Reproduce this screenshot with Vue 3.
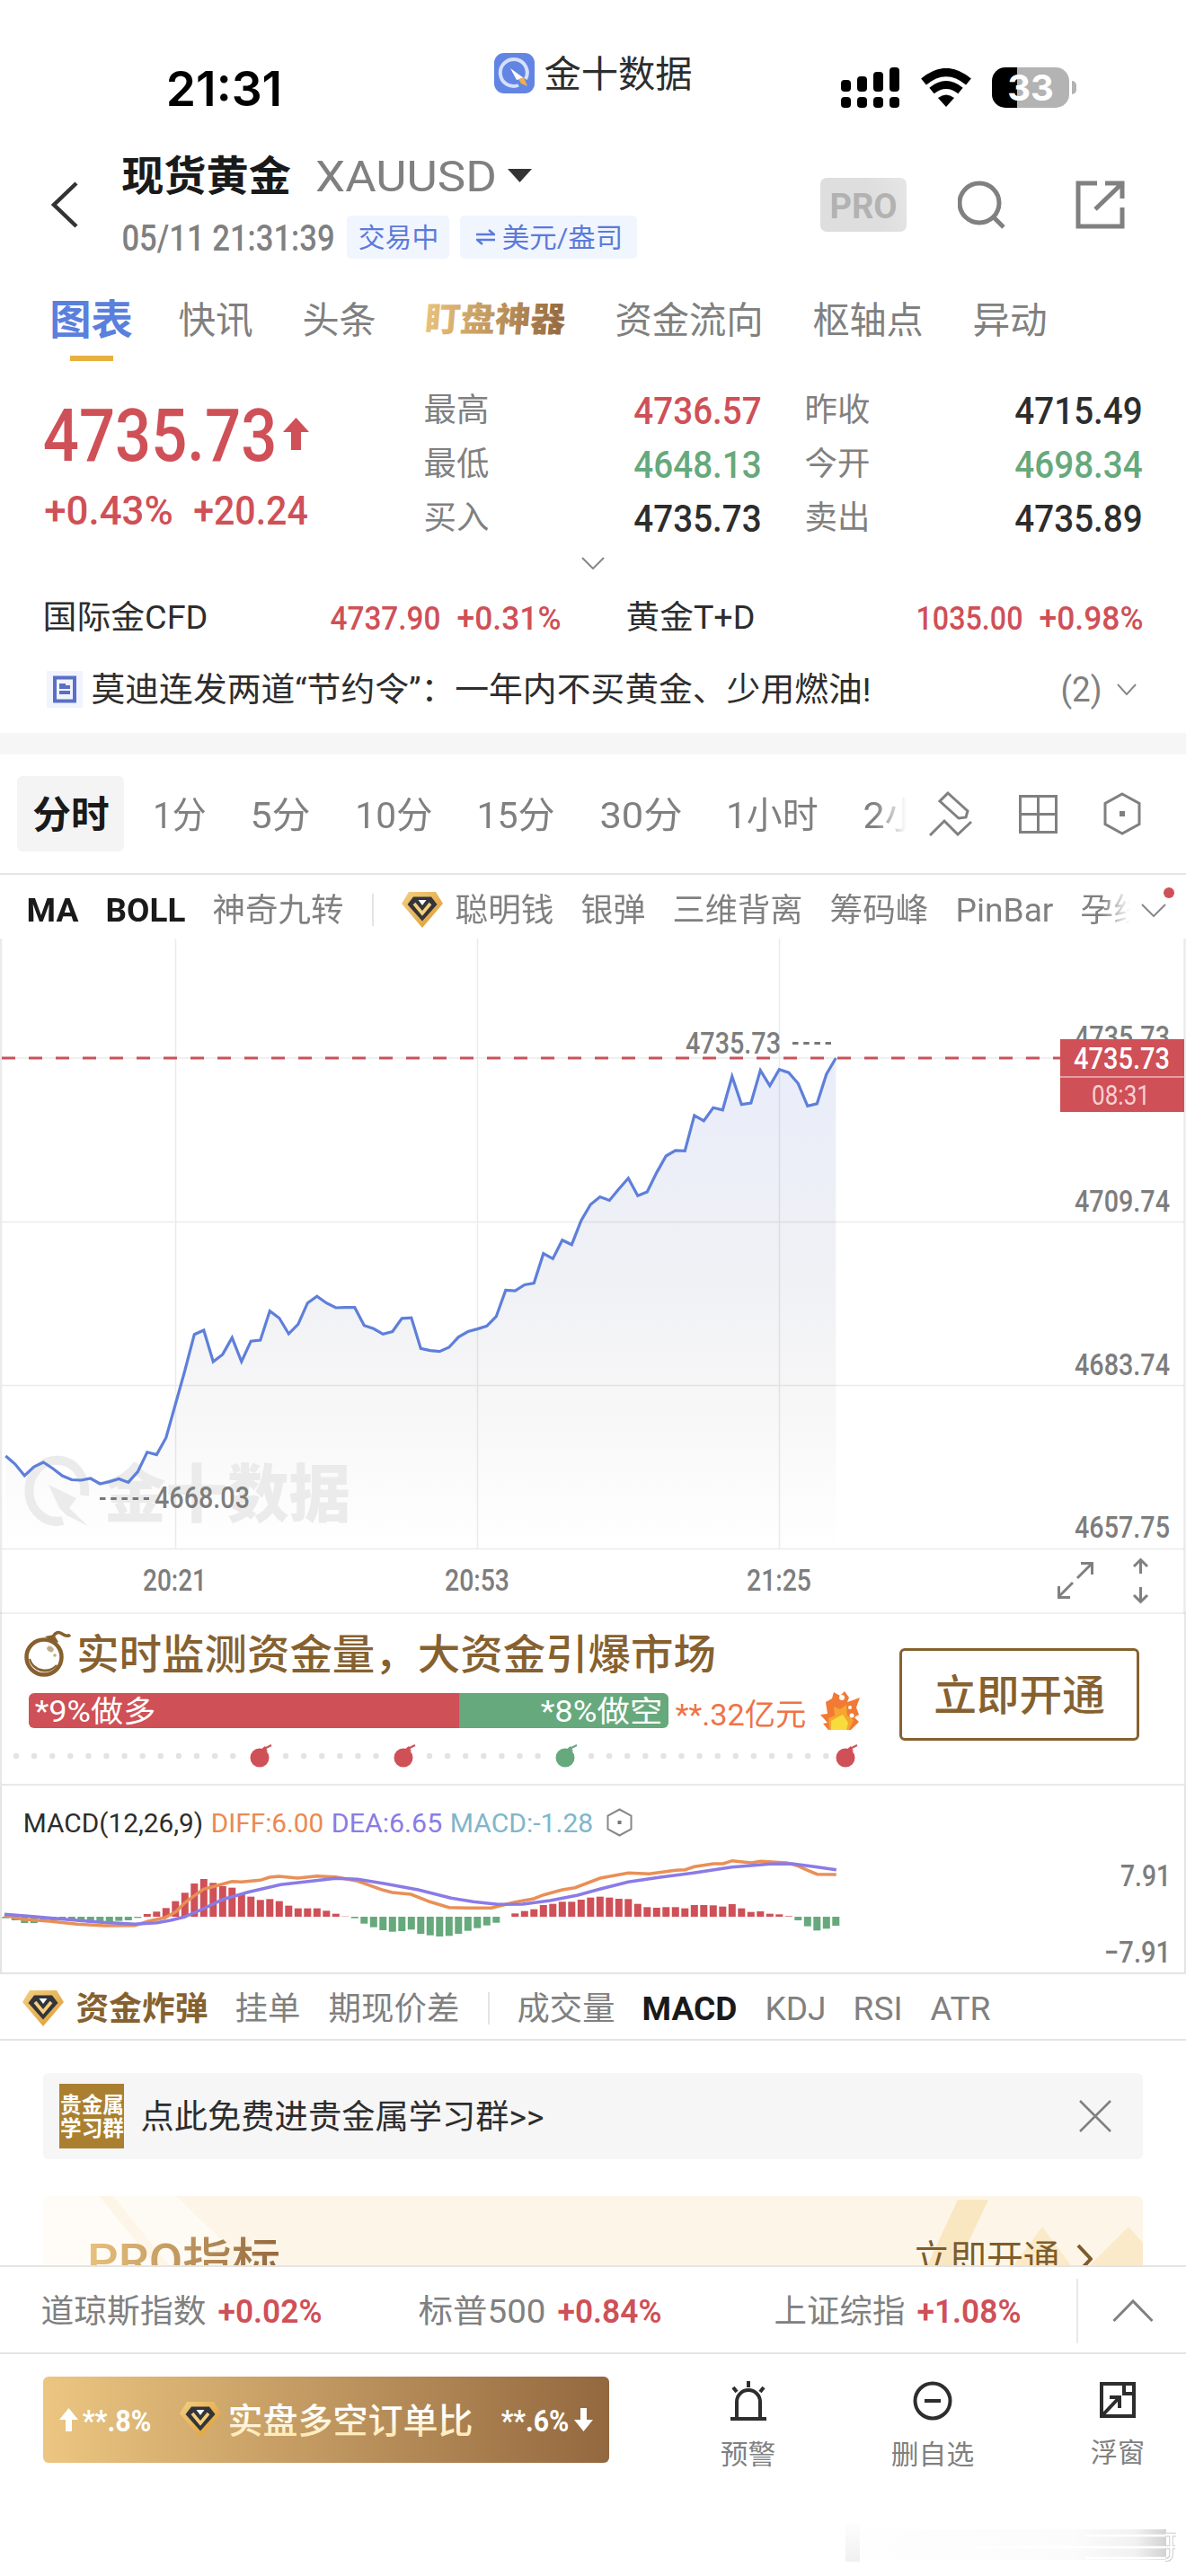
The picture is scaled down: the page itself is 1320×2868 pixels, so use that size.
<script setup>
import { h, ref } from 'vue';

// single line of text squeezed or stretched to a fixed width, vertically centred in its box
const FitText = (props) => {
  const size = Number(props.s);
  const width = Number(props.w);
  return h('svg', { width, height: size, class: 'fit' }, [
    h('text', {
      x: -size * 0.04,
      y: size * 0.87,
      'font-size': size,
      textLength: width + size * 0.08,
      lengthAdjust: 'spacingAndGlyphs',
    }, props.t),
  ]);
};
FitText.props = ['t', 'w', 's'];

// gold diamond with the dark V
const Diamond = () =>
  h('svg', { width: 46, height: 40, viewBox: '0 0 46 40', class: 'diamond' }, [
    h('path', { d: 'M8 0H38L46 13L23 40L0 13Z', fill: 'url(#gem)' }),
    h('path', { d: 'M13 5.5H33L39.5 14L23 32.5L6.5 14Z', fill: '#33353a' }),
    h('path', { d: 'M14 13L23 24L32 13', fill: 'none', stroke: '#f5cf7c', 'stroke-width': 3.6 }),
    h('path', { d: 'M18.5 9H27.5L23 15Z', fill: '#fff' }),
  ]);

const tabs = [
  { t: '图表', w: 89, s: 46, c: 'on' },
  { t: '快讯', w: 80, s: 41 },
  { t: '头条', w: 79, s: 41 },
  { t: '盯盘神器', w: 153, s: 38, c: 'gold' },
  { t: '资金流向', w: 162, s: 41 },
  { t: '枢轴点', w: 120, s: 41 },
  { t: '异动', w: 80, s: 41 },
];

const quotes = [
  { label: '最高', value: '4736.57', c: 'red' },
  { label: '昨收', value: '4715.49', c: '' },
  { label: '最低', value: '4648.13', c: 'green' },
  { label: '今开', value: '4698.34', c: 'green' },
  { label: '买入', value: '4735.73', c: '' },
  { label: '卖出', value: '4735.89', c: '' },
];

const periods = [
  { t: '1分', w: 56 },
  { t: '5分', w: 64 },
  { t: '10分', w: 83 },
  { t: '15分', w: 84 },
  { t: '30分', w: 89 },
  { t: '1小时', w: 99 },
  { t: '2小时', w: 107 },
];

const smart = [
  { t: '聪明钱', w: 107 },
  { t: '银弹', w: 69 },
  { t: '三维背离', w: 142 },
  { t: '筹码峰', w: 107 },
  { t: 'PinBar', w: 106 },
  { t: '孕线', w: 70 },
];

const step = 10.5;
const start = 6.3;

const prices = ref([
  576, 585, 598, 588, 583, 590, 598, 602.5, 603, 601, 607, 604.6, 601.4, 605.4, 593.6, 571.8, 574.6, 555.7, 518.2, 480.7,
  440.7, 436, 471, 462.9, 444.3, 471, 448.2, 447.1, 414.6, 422.5, 440, 429.3, 405.7, 398.2, 405.7, 411, 410.7, 410.7,
  430.7, 434.3, 440.4, 437.5, 422.9, 422.1, 456.4, 458.6, 459.6, 455, 443.6, 437.5, 434.6, 431.4, 420.7, 391.4, 392.1,
  385.4, 383.6, 350.7, 356.4, 335.7, 340.7, 313.9, 296, 287.5, 291.4, 278.8, 266.7, 286.2, 281.9, 260.6, 242, 235.9,
  236.3, 196.9, 202.9, 188.2, 190.8, 153.5, 184.7, 183, 146.6, 163.9, 145.7, 149.2, 161.3, 186.4, 183.8, 150.9, 133,
]);
const line = prices.value.map((y, i) => `${(start + i * step).toFixed(1)},${y}`).join(' ');
const area = `${start},680 ${line} 930.3,680`;

const macd = [
  -5, -12, -21, -21, -17, -14, -12, -14, -18, -20, -20, -18, -14, -12, -4, 9, 17, 29, 52, 80, 111, 126, 113, 102, 97, 78,
  67, 56, 59, 52, 37, 28, 28, 28, 20, 10, 1, -5, -23, -35, -45, -50, -48, -43, -57, -62, -66, -64, -57, -47, -38, -29,
  -20, 0, 11, 19, 25, 39, 43, 50, 50, 57, 64, 67, 64, 60, 59, 43, 32, 30, 32, 32, 28, 39, 39, 38, 34, 42, 28, 16, 18, 10,
  8, 2, -12, -32, -46, -40, -30,
];
const bars = macd.map((v, i) => ({
  x: start + i * step - 4,
  y: v > 0 ? 146 - v / 3 : 146,
  h: Math.abs(v) / 3,
  fill: v > 0 ? '#cf5057' : '#66a97c',
}));

const toPoints = (list) => list.map(([x, y]) => `${(x / 1.633).toFixed(1)},${(y / 3 + 2).toFixed(1)}`).join(' ');
const diff = toPoints([
  [8, 427], [40, 440], [90, 447], [140, 457], [190, 462], [245, 461], [270, 447], [300, 435], [320, 415], [336, 385],
  [353, 362], [370, 340], [395, 328], [422, 314], [439, 316], [473, 310], [490, 300], [507, 297], [541, 303], [576, 296],
  [610, 299], [650, 313], [696, 343], [713, 351], [747, 357], [781, 382], [816, 401], [850, 403], [893, 403], [936, 383],
  [970, 372], [988, 359], [1022, 342], [1045, 335], [1091, 303], [1142, 286], [1180, 289], [1228, 277], [1245, 275],
  [1262, 265], [1297, 255], [1314, 255], [1331, 245], [1365, 252], [1383, 247], [1430, 252], [1450, 262], [1468, 277],
  [1485, 290], [1520, 291],
]);
const dea = toPoints([
  [8, 424], [60, 431], [120, 441], [180, 450], [245, 457], [285, 452], [310, 444], [335, 433], [370, 405], [405, 374],
  [450, 350], [510, 325], [560, 314], [610, 304], [650, 307], [700, 322], [760, 342], [820, 370], [860, 382], [905, 391],
  [950, 390], [1000, 378], [1050, 360], [1090, 340], [1142, 316], [1200, 300], [1260, 286], [1330, 266], [1400, 256],
  [1440, 255], [1480, 265], [1520, 275],
]);

const run = (from, count) => Array.from({ length: count }, (_, i) => from + i * 20.1);
const dots = [...run(18, 13), ...run(318, 6), ...run(478, 7), ...run(658, 14)];
const bombs = [
  { x: 289, fill: '#cf5057' },
  { x: 449, fill: '#cf5057' },
  { x: 629, fill: '#66a97c' },
  { x: 941, fill: '#cf5057' },
];
</script>

<template>
  <main class="page">
    <svg width="0" height="0" class="defs">
      <defs>
        <linearGradient id="gold"><stop offset="0" stop-color="#e9c27c" /><stop offset="1" stop-color="#94683f" /></linearGradient>
        <linearGradient id="cream" x2="0" y2="1"><stop offset="0.3" stop-color="#fff" /><stop offset="1" stop-color="#ffe3a0" /></linearGradient>
        <linearGradient id="gem" x2="1" y2="1"><stop offset="0" stop-color="#f3cf83" /><stop offset="1" stop-color="#dd9a2e" /></linearGradient>
      </defs>
    </svg>

    <header class="status">
      <FitText t="21:31" w="125" s="54" class="time" />
      <div class="brand">
        <svg width="45" height="45" viewBox="0 0 45 45">
          <rect width="45" height="45" rx="11" fill="#6285e4" />
          <path d="M35 29A15 15 0 1 0 27 36" fill="none" stroke="#d5e0ff" stroke-width="4" />
          <path d="M18 17L33 28L25 30Z" fill="#fff" />
          <path d="M27 29L33 27L37 37L30 34Z" fill="#efb04a" />
        </svg>
        <FitText t="金十数据" w="162" s="41" />
      </div>
      <div class="signals">
        <svg width="66" height="46" viewBox="0 0 66 46">
          <rect x="0" y="14" width="11" height="13" rx="4" /><rect x="18" y="10" width="11" height="17" rx="4" />
          <rect x="36" y="5" width="11" height="22" rx="4" /><rect x="54" y="0" width="11" height="27" rx="4" />
          <rect v-for="x in [0, 18, 36, 54]" :key="x" :x="x" y="33" width="11" height="12" rx="4" />
        </svg>
        <svg width="58" height="43" viewBox="0 0 58 43">
          <path d="M4 15Q29 -6 54 15" fill="none" stroke="#000" stroke-width="9" />
          <path d="M13 25Q29 12 45 25" fill="none" stroke="#000" stroke-width="8.5" />
          <path d="M20 33Q29 26 38 33L29 43Z" />
        </svg>
        <div class="battery"><span>33</span></div>
      </div>
    </header>

    <section class="header">
      <svg class="back" width="30" height="52" viewBox="0 0 30 52"><path d="M28 2L3 26L28 50" fill="none" stroke="#333" stroke-width="4.5" /></svg>
      <div class="title">
        <div class="name">
          <FitText t="现货黄金" w="185" s="46" class="strong" />
          <FitText t="XAUUSD" w="198" s="48" class="grey" />
          <svg width="27" height="15"><path d="M0 0H27L13.500 15Z" fill="#333" /></svg>
        </div>
        <div class="meta">
          <FitText t="05/11 21:31:39" w="234" s="40" class="grey mid" />
          <span class="tag"><FitText t="交易中" w="87" s="30" /></span>
          <span class="tag">
            <svg width="21" height="18" viewBox="0 0 21 18"><path d="M0 6H20L14 1M21 12H1L7 17" fill="none" stroke="#5b7bd9" stroke-width="2.500" /></svg>
            <FitText t="美元/盎司" w="132" s="30" />
          </span>
        </div>
      </div>
      <div class="tools">
        <span class="pro"><FitText t="PRO" w="72" s="39" /></span>
        <svg width="54" height="54" viewBox="0 0 54 54" fill="none" stroke="#808080" stroke-width="5"><circle cx="24" cy="25" r="22" /><path d="M39 40L51 52" /></svg>
        <svg width="56" height="54" viewBox="0 0 56 54" fill="none" stroke="#808080" stroke-width="5"><path d="M24 3H3V51H52V30M33 3H52V20M52 3L22 32" /></svg>
      </div>
    </section>

    <nav class="tabs">
      <FitText v-for="tab in tabs" :key="tab.t" :t="tab.t" :w="tab.w" :s="tab.s" :class="tab.c" />
    </nav>

    <section class="quote">
      <div class="last">
        <div class="price">
          <FitText t="4735.73" w="254" s="82" />
          <svg width="29" height="36"><path d="M14.500 0L29 16H20V36H9V16H0Z" fill="#cf5057" /></svg>
        </div>
        <div class="change">
          <FitText t="+0.43%" w="140" s="45" />
          <FitText t="+20.24" w="124" s="45" />
        </div>
      </div>
      <div class="grid">
        <div v-for="q in quotes" :key="q.label" class="cell">
          <FitText :t="q.label" w="70" s="36" class="grey thin" />
          <FitText :t="q.value" w="139" s="42" :class="q.c" />
        </div>
      </div>
    </section>
    <div class="more"><svg width="26" height="14"><path d="M1 1L13 13L25 1" fill="none" stroke="#888" stroke-width="2" /></svg></div>

    <section class="related">
      <div class="item">
        <FitText t="国际金CFD" w="181" s="36" class="dark" />
        <FitText t="4737.90" w="120" s="37" class="push" />
        <FitText t="+0.31%" w="113" s="37" />
      </div>
      <div class="item">
        <FitText t="黄金T+D" w="141" s="36" class="dark" />
        <FitText t="1035.00" w="116" s="37" class="push" />
        <FitText t="+0.98%" w="113" s="37" />
      </div>
    </section>

    <section class="news">
      <svg width="40" height="41"><rect width="40" height="41" fill="#f1f4fe" /><path d="M9 7.500H31V33.500H9ZM14 16H21M14 18H26M14 24H26" fill="none" stroke="#5a70c4" stroke-width="4" /></svg>
      <FitText t="莫迪连发两道“节约令”：一年内不买黄金、少用燃油!" w="865" s="37" />
      <FitText t="(2)" w="43" s="38" class="grey push" />
      <svg width="22" height="13"><path d="M1 1L11 12L21 1" fill="none" stroke="#888" stroke-width="2" /></svg>
    </section>
    <div class="band"></div>

    <section class="periods">
      <div class="scroller">
        <span class="chip"><FitText t="分时" w="82" s="42" /></span>
        <FitText v-for="p in periods" :key="p.t" :t="p.t" :w="p.w" s="41" />
      </div>
      <div class="icons">
        <svg width="48" height="50" viewBox="0 0 48 50" fill="none" stroke="#808080" stroke-width="3"><path d="M21 2L43 22L41 29L33 30L12 11ZM1 49L17 33L32 48L47 34" /></svg>
        <svg width="43" height="43" viewBox="0 0 43 43" fill="none" stroke="#808080" stroke-width="3"><path d="M1.500 1.500H41.500V41.500H1.500ZM21.500 1V42M1 21.500H42" /></svg>
        <svg width="42" height="48" viewBox="0 0 42 48"><path d="M21 2L40 12.500V35.500L21 46L2 35.500V12.500Z" fill="none" stroke="#808080" stroke-width="3" /><rect x="18" y="21" width="6" height="6" fill="#808080" /></svg>
      </div>
    </section>

    <section class="indicators">
      <div class="scroller">
        <FitText t="MA" w="55" s="36" class="strong" />
        <FitText t="BOLL" w="86" s="36" class="strong" />
        <FitText t="神奇九转" w="143" s="36" />
        <i class="sep"></i>
        <Diamond />
        <FitText v-for="s in smart" :key="s.t" :t="s.t" :w="s.w" s="36" />
      </div>
      <div class="drop">
        <svg width="28" height="15"><path d="M1 1L14 14L27 1" fill="none" stroke="#888" stroke-width="2" /></svg>
        <i class="dot"></i>
      </div>
    </section>

    <svg class="chart" width="1320" height="752" viewBox="0 0 1320 752">
      <defs>
        <linearGradient id="fill" gradientUnits="userSpaceOnUse" x1="0" y1="133" x2="0" y2="680">
          <stop offset="0" stop-color="#e9edfa" />
          <stop offset="0.45" stop-color="#f0f1f5" />
          <stop offset="0.75" stop-color="#f8f8f8" />
          <stop offset="1" stop-color="#fff" />
        </linearGradient>
      </defs>
      <polygon :points="area" fill="url(#fill)" />
      <g stroke="#000" stroke-opacity="0.08" stroke-width="1.500">
        <path d="M195.500 0V680M531.500 0V680M867.500 0V680M2 133H1180M2 315.500H1318M2 497.500H1318M2 679.500H1318M0 751H1320" />
        <path d="M1 0V752M1318.500 0V752" stroke-width="2.500" />
      </g>
      <g class="watermark">
        <path d="M70 648A31 34 0 1 1 94 620" fill="none" stroke="#ebebeb" stroke-width="10" />
        <path d="M54 608L85 623L77 634L98 654L74 642L66 634Z" />
        <text x="116" y="644" font-size="70" textLength="274" lengthAdjust="spacingAndGlyphs">金十数据</text>
      </g>
      <polyline :points="line" fill="none" stroke="#5e7fda" stroke-width="3.200" />
      <path d="M2 133H1180" stroke="#c9525a" stroke-width="3" stroke-dasharray="15 15" />
      <g class="label">
        <text x="763" y="127.500" font-size="33" textLength="106" lengthAdjust="spacingAndGlyphs">4735.73</text>
        <text x="172" y="634" font-size="33" textLength="106" lengthAdjust="spacingAndGlyphs">4668.03</text>
        <text x="1196" y="121" font-size="33" textLength="106" lengthAdjust="spacingAndGlyphs">4735.73</text>
        <text x="1196" y="303.500" font-size="33" textLength="106" lengthAdjust="spacingAndGlyphs">4709.74</text>
        <text x="1196" y="485.500" font-size="33" textLength="106" lengthAdjust="spacingAndGlyphs">4683.74</text>
        <text x="1196" y="667" font-size="33" textLength="106" lengthAdjust="spacingAndGlyphs">4657.75</text>
        <text x="159" y="726" font-size="33" textLength="71" lengthAdjust="spacingAndGlyphs">20:21</text>
        <text x="495" y="726" font-size="33" textLength="72" lengthAdjust="spacingAndGlyphs">20:53</text>
        <text x="831" y="726" font-size="33" textLength="72" lengthAdjust="spacingAndGlyphs">21:25</text>
      </g>
      <path d="M882 116.500H925M111 623.500H166" stroke="#777" stroke-width="3" stroke-dasharray="6.500 5.700" />
      <rect x="1180" y="112" width="138" height="81" fill="#cf5057" />
      <path d="M1180 154H1318" stroke="#ebb9bc" stroke-width="1.500" />
      <g class="label">
        <text x="1195" y="144.500" font-size="33" textLength="107" lengthAdjust="spacingAndGlyphs" class="white">4735.73</text>
        <text x="1215" y="185" font-size="31" textLength="65" lengthAdjust="spacingAndGlyphs" class="pink">08:31</text>
      </g>
      <g fill="none" stroke="#808080" stroke-width="3">
        <path d="M1199 712L1215 696M1203 695.500H1215.500V708M1194 717L1178 733M1178.500 721V733.500H1191" />
        <path d="M1269.500 707V692M1262 699L1269.500 691.500L1277 699M1269.500 722V738M1262 731L1269.500 738.500L1277 731" />
      </g>
    </svg>

    <section class="banner">
      <div class="promo">
        <div class="slogan">
          <svg width="52" height="54" viewBox="0 0 52 54">
            <circle cx="22" cy="31" r="19.500" fill="#fff" stroke="#86612f" stroke-width="4.500" />
            <path d="M6 33A17 17 0 0 0 36 40A18 18 0 0 1 6 33" fill="#c9bfae" stroke="#86612f" stroke-width="2" />
            <path d="M23 8L33 6L38 14L34 16Z" fill="#86612f" />
            <path d="M32 8Q36 1 42 5T51 6" fill="none" stroke="#86612f" stroke-width="3.500" />
            <ellipse cx="29" cy="22" rx="4" ry="3" fill="#c0ad8d" transform="rotate(35 29 22)" />
            <circle cx="34" cy="29" r="1.800" fill="#c0ad8d" />
          </svg>
          <FitText t="实时监测资金量，大资金引爆市场" w="708" s="46" />
        </div>
        <div class="ratio">
          <div class="long"><FitText t="*9%做多" w="132" s="33" /></div>
          <div class="short"><FitText t="*8%做空" w="133" s="33" /></div>
          <FitText t="**.32亿元" w="143" s="34" class="amount" />
          <svg class="flame" width="45" height="43" viewBox="0 0 45 43">
            <path d="M9 43L3 36L8 35L0 26L8 25L6 12L13 8L15 1L22 5L27 0L32 7L30 12L36 10L44 7L40 18L43 26L38 29L43 34L34 43Z" fill="#f07a36" />
            <path d="M10 43L9 30L16 27L15 17L22 20L29 15L30 27L37 32L32 43Z" fill="#f6a52f" />
            <path d="M12 43L12 33L19 29L25 26L31 35L29 43Z" fill="#f8dc3e" />
            <circle cx="24" cy="7" r="3" fill="#fff" /><circle cx="35" cy="27" r="2.500" fill="#fff" /><circle cx="33" cy="18" r="2" fill="#fff" />
          </svg>
        </div>
        <svg class="track" width="970" height="32">
          <circle v-for="x in dots" :key="x" :cx="x" cy="16" r="3.200" fill="#e3e3e3" />
          <g v-for="b in bombs" :key="b.x" :fill="b.fill">
            <circle :cx="b.x" cy="18" r="10.500" />
            <path :d="`M${b.x + 1} 9L${b.x + 6} 5L${b.x + 9} 11Z`" />
            <path :d="`M${b.x + 5} 8L${b.x + 13} 4`" :stroke="b.fill" stroke-width="2" />
          </g>
        </svg>
      </div>
      <button class="open"><FitText t="立即开通" w="187" s="47" /></button>
    </section>

    <section class="macd">
      <div class="legend">
        <FitText t="MACD(12,26,9)" w="198" s="30" />
        <FitText t="DIFF:6.00" w="123" s="30" class="diff" />
        <FitText t="DEA:6.65" w="121" s="30" class="dea" />
        <FitText t="MACD:-1.28" w="157" s="30" class="val" />
        <svg width="29" height="32" viewBox="0 0 29 32"><path d="M14.500 1.500L27.500 8.500V23.500L14.500 30.500L1.500 23.500V8.500Z" fill="none" stroke="#888" stroke-width="2" /><rect x="12.500" y="14" width="4" height="4" fill="#777" /></svg>
      </div>
      <svg class="plot" width="1320" height="210">
        <rect v-for="(b, i) in bars" :key="i" :x="b.x" :y="b.y" width="8" :height="b.h" :fill="b.fill" />
        <polyline :points="diff" fill="none" stroke="#e98f57" stroke-width="3.500" />
        <polyline :points="dea" fill="none" stroke="#8a7be6" stroke-width="3.500" />
        <g class="label">
          <text x="1247" y="112" font-size="33" textLength="56" lengthAdjust="spacingAndGlyphs">7.91</text>
          <text x="1229" y="197" font-size="33" textLength="74" lengthAdjust="spacingAndGlyphs">−7.91</text>
        </g>
      </svg>
    </section>

    <section class="indicators sub">
      <Diamond />
      <FitText t="资金炸弹" w="144" s="36" class="brown" />
      <FitText t="挂单" w="70" s="36" />
      <FitText t="期现价差" w="143" s="36" />
      <i class="sep"></i>
      <FitText t="成交量" w="106" s="36" />
      <FitText t="MACD" w="103" s="37" class="strong" />
      <FitText t="KDJ" w="65" s="37" />
      <FitText t="RSI" w="52" s="37" />
      <FitText t="ATR" w="64" s="37" />
    </section>

    <section class="group">
      <div class="cover">
        <FitText t="贵金属" w="69" s="24" />
        <FitText t="学习群" w="69" s="24" />
      </div>
      <FitText t="点此免费进贵金属学习群>>" w="446" s="37" />
      <svg class="push" width="36" height="36"><path d="M1 1L35 35M35 1L1 35" stroke="#808080" stroke-width="2.500" /></svg>
    </section>

    <section class="pro-card">
      <svg class="shape" width="1224" height="77">
        <path d="M0 0H62L125 77H0Z" fill="#fff" opacity="0.7" />
        <path d="M78 0H148L200 50L175 77H140Z" fill="#fff" opacity="0.5" />
        <path d="M1018 4H1052L1018 77H984Z" fill="#f9e7c2" />
        <path d="M1080 77L1112 34L1144 77ZM1165 77L1208 34L1224 52V77Z" fill="#f9e7c2" opacity="0.8" />
      </svg>
      <FitText t="PRO指标" w="211" s="52" class="name" />
      <FitText t="立即开通" w="160" s="41" class="act" />
      <svg class="go" width="18" height="32"><path d="M2 1L16 16L2 31" fill="none" stroke="#7f5c2c" stroke-width="4" /></svg>
    </section>

    <section class="indices">
      <div class="idx"><FitText t="道琼斯指数" w="181" s="36" class="grey" /><FitText t="+0.02%" w="113" s="37" class="up" /></div>
      <div class="idx second"><FitText t="标普500" w="139" s="36" class="grey" /><FitText t="+0.84%" w="113" s="37" class="up" /></div>
      <div class="idx third"><FitText t="上证综指" w="143" s="36" class="grey" /><FitText t="+1.08%" w="113" s="37" class="up" /></div>
      <i class="bar"></i>
      <svg width="46" height="26"><path d="M1.500 24L23 2L44.500 24" fill="none" stroke="#808080" stroke-width="3" /></svg>
    </section>

    <footer class="actions">
      <div class="order">
        <svg width="21" height="26"><path d="M10.500 0L21 13H14V26H7V13H0Z" fill="#fff" /></svg>
        <FitText t="**.8%" w="74" s="34" class="pct" />
        <Diamond />
        <FitText t="实盘多空订单比" w="270" s="39" class="text" />
        <FitText t="**.6%" w="73" s="34" class="pct end" />
        <svg width="21" height="26"><path d="M10.500 26L21 13H14V0H7V13H0Z" fill="#fff" /></svg>
      </div>
      <div class="act">
        <svg width="40" height="44" viewBox="0 0 40 44" fill="none" stroke="#2d2d2d" stroke-width="4"><path d="M0 42H40M7 42V23A13 13 0 0 1 33 23V42M20 0V7M3 7L7 12M37 7L33 12" /></svg>
        <FitText t="预警" w="59" s="30" />
      </div>
      <div class="act">
        <svg width="44" height="44" viewBox="0 0 44 44" fill="none" stroke="#2d2d2d" stroke-width="4"><circle cx="22" cy="22" r="19.500" /><path d="M13 22H31" /></svg>
        <FitText t="删自选" w="90" s="30" />
      </div>
      <div class="act">
        <svg width="40" height="42" viewBox="0 0 40 42" fill="none" stroke="#2d2d2d" stroke-width="4"><path d="M2 3H38V39H2ZM27 3V14H38M4 37L21 19M11 18H22V30" /></svg>
        <FitText t="浮窗" w="58" s="30" />
      </div>
    </footer>

    <svg class="smudge" width="380" height="56">
      <defs>
        <linearGradient id="haze"><stop offset="0" stop-color="#fefefe" /><stop offset="0.7" stop-color="#fbfbfb" /><stop offset="0.9" stop-color="#f1f1f1" /><stop offset="1" stop-color="#d2d2d2" /></linearGradient>
        <linearGradient id="edge" x2="0" y2="1"><stop offset="0" stop-color="#fefefe" /><stop offset="1" stop-color="#f0f0f0" /></linearGradient>
      </defs>
      <rect x="3" y="4" width="16" height="44" fill="url(#edge)" />
      <rect x="20" y="12" width="340" height="34" fill="url(#haze)" />
      <path d="M270 19H362M150 32H362M270 44H362" stroke="#fff" stroke-width="2.500" />
      <path d="M359 18H371M359 32H370M365.500 18V41Q365 46 359 46" fill="none" stroke="#ccc" stroke-width="4.500" />
      <path d="M359 18H371M359 32H370M365.500 18V41Q365 46 359 46" fill="none" stroke="#fff" stroke-width="2.500" />
    </svg>
  </main>
</template>

<style>
body {
  background: #fff;
}
</style>

<style scoped>
.page {
  position: relative;
  width: 1320px;
  height: 2868px;
  overflow: hidden;
  background: #fff;
  color: #2d2d2d;
  fill: #2d2d2d;
  font-family: Roboto, "Noto Sans CJK SC", sans-serif;
}

.page * {
  box-sizing: border-box;
}

.page svg {
  display: block;
  flex: none;
}

.fit {
  overflow: visible;
}

.defs {
  position: absolute;
}

.grey {
  fill: #808080;
}

.thin {
  font-weight: 400;
}

.mid {
  font-weight: 500;
}

.strong {
  fill: #1a1a1a;
  font-weight: 700;
}

.red {
  fill: #cf5057;
}

.green {
  fill: #66a97c;
}

.push {
  margin-left: auto;
}

.status {
  display: flex;
  align-items: center;
  height: 150px;
  padding: 45px 130px 0 187px;
}

.time {
  fill: #000;
  font-family: Inter, sans-serif;
  font-weight: 600;
}

.brand {
  display: flex;
  align-items: center;
  gap: 12px;
  margin: -32px 0 0 238px;
}

.signals {
  display: flex;
  align-items: center;
  gap: 22px;
  margin-left: auto;
  fill: #000;
}

.battery {
  position: relative;
  width: 86px;
  height: 45px;
  border-radius: 15px;
  background: linear-gradient(90deg, #000 28px, #b3b3b3 28px);
  color: #fff;
  font: 700 40px/45px Inter, sans-serif;
  text-align: center;
}

.battery::after {
  content: "";
  position: absolute;
  right: -8px;
  top: 15px;
  width: 5px;
  height: 15px;
  border-radius: 0 5px 5px 0;
  background: #b3b3b3;
}

.header {
  display: flex;
  align-items: center;
  height: 156px;
  padding: 0 67px 0 57px;
}

.title {
  margin-left: 50px;
}

.name {
  display: flex;
  align-items: center;
  height: 72px;
}

.name .grey {
  margin: 0 14px 0 31px;
}

.meta {
  display: flex;
  align-items: center;
  height: 66px;
}

.tag {
  display: flex;
  align-items: center;
  justify-content: center;
  gap: 9px;
  width: 114px;
  height: 48px;
  margin-left: 15px;
  border-radius: 5px;
  background: #f1f5fe;
  fill: #5b7bd9;
}

.tag + .tag {
  width: 197px;
  margin-left: 12px;
}

.tools {
  display: flex;
  align-items: center;
  margin-left: auto;
  gap: 77px;
}

.pro {
  display: flex;
  align-items: center;
  justify-content: center;
  width: 96px;
  height: 60px;
  margin-right: -20px;
  border-radius: 7px;
  background: linear-gradient(70deg, #dedede 60%, #e6e6e6);
  fill: #b2b2b2;
  font-weight: 700;
}

.tabs {
  position: relative;
  display: flex;
  align-items: center;
  gap: 58px;
  height: 98px;
  padding-left: 57px;
  fill: #808080;
}

.tabs::after {
  content: "";
  position: absolute;
  left: 78px;
  bottom: 2px;
  width: 48px;
  height: 6px;
  background: #e8b040;
}

.tabs .on {
  margin-right: -4px;
  fill: #5b7fdd;
  font-weight: 700;
}

.tabs .gold {
  fill: url(#gold);
  font-weight: 900;
  transform: skewX(-5deg);
}

.quote {
  display: flex;
  padding: 22px 50px 0 51px;
  font-weight: 500;
}

.last {
  width: 422px;
  fill: #cf5057;
}

.price {
  display: flex;
  align-items: center;
  gap: 10px;
  height: 114px;
}

.change {
  display: flex;
  align-items: center;
  gap: 26px;
  height: 54px;
}

.grid {
  flex: 1;
  display: grid;
  grid-template-columns: 373px 373px;
  column-gap: 51px;
}

.cell {
  display: flex;
  align-items: center;
  justify-content: space-between;
  height: 60px;
}

.more {
  display: flex;
  align-items: center;
  justify-content: center;
  height: 42px;
}

.related {
  display: flex;
  gap: 75px;
  height: 78px;
  padding: 0 49px;
}

.item {
  flex: 1;
  display: flex;
  align-items: center;
  gap: 21px;
  fill: #cf5057;
  font-weight: 500;
}

.item .dark {
  fill: #2d2d2d;
  font-weight: 400;
}

.news {
  display: flex;
  align-items: center;
  gap: 11px;
  height: 82px;
  padding: 0 55px 0 52px;
}

.news .push {
  margin-right: 7px;
}

.band {
  height: 24px;
  margin-top: 8px;
  background: #f6f6f6;
}

.periods {
  display: flex;
  align-items: center;
  height: 134px;
  padding: 0 50px 0 19px;
  border-bottom: 2px solid #e4e4e4;
  fill: #808080;
}

.scroller {
  display: flex;
  align-items: center;
  overflow: hidden;
}

.periods .scroller {
  width: 990px;
  height: 132px;
  gap: 52.5px;
  -webkit-mask-image: linear-gradient(90deg, #000 955px, transparent 990px);
  mask-image: linear-gradient(90deg, #000 955px, transparent 990px);
}

.chip {
  flex: none;
  display: flex;
  align-items: center;
  justify-content: center;
  width: 119px;
  height: 84px;
  margin-right: -19px;
  border-radius: 6px;
  background: #f4f4f4;
  fill: #1a1a1a;
  font-weight: 700;
}

.icons {
  display: flex;
  align-items: center;
  justify-content: space-between;
  width: 236px;
  margin-left: auto;
}

.indicators {
  display: flex;
  align-items: center;
  height: 71px;
  padding: 7px 22px 0 31px;
  fill: #808080;
}

.indicators .scroller {
  width: 1227px;
  height: 64px;
  gap: 33px;
  -webkit-mask-image: linear-gradient(90deg, #000 1195px, transparent 1227px);
  mask-image: linear-gradient(90deg, #000 1195px, transparent 1227px);
}

.indicators .diamond {
  margin-right: -18px;
}

.sep {
  flex: none;
  width: 2px;
  height: 36px;
  background: #e4e4e4;
  margin-right: -2px;
}

.drop {
  position: relative;
  margin-left: 12px;
}

.dot {
  position: absolute;
  left: 25px;
  top: -18px;
  width: 12px;
  height: 12px;
  border-radius: 50%;
  background: #cf5057;
}

.label {
  fill: #7d7d7d;
  font-weight: 500;
}

.label .white {
  fill: #fff;
}

.label .pink {
  fill: #f6cfd1;
  font-weight: 400;
}

.watermark {
  fill: #ebebeb;
  font-weight: 900;
}

.banner {
  display: flex;
  align-items: flex-start;
  height: 191px;
  border: 2px solid #e8e8e8;
  border-top: 0;
}

.slogan {
  display: flex;
  align-items: center;
  gap: 8px;
  height: 86px;
  padding: 2px 0 0 25px;
  fill: #86612f;
  font-weight: 500;
}

.ratio {
  display: flex;
  align-items: center;
  height: 42px;
  padding-left: 30px;
  fill: #fff;
}

.long,
.short {
  display: flex;
  align-items: center;
  height: 39px;
  padding: 0 8px;
}

.long {
  width: 479px;
  border-radius: 6px 0 0 6px;
  background: #cf5057;
}

.short {
  justify-content: flex-end;
  width: 233px;
  border-radius: 0 6px 6px 0;
  background: #66a97c;
}

.amount {
  margin: 8px 0 0 9px;
  fill: #ee7347;
}

.flame {
  margin-left: 17px;
}

.track {
  margin: 14px 0 0 -2px;
}

.open {
  display: flex;
  align-items: center;
  justify-content: center;
  width: 267px;
  height: 103px;
  margin: 38px 0 0 31px;
  padding: 0;
  border: 3px solid #86612f;
  border-radius: 6px;
  background: #fff;
  fill: #86612f;
  font-family: inherit;
  font-weight: 500;
}

.macd {
  position: relative;
  height: 210px;
  border: 2px solid #e4e4e4;
  border-top: 0;
}

.legend {
  display: flex;
  align-items: center;
  gap: 11px;
  height: 82px;
  padding-left: 25px;
}

.legend svg:last-child {
  margin-left: 5px;
}

.legend .diff {
  fill: #ea8a50;
}

.legend .dea {
  fill: #8a7be6;
}

.legend .val {
  fill: #7fb6cb;
}

.plot {
  position: absolute;
  left: -2px;
  top: 0;
}

.sub {
  gap: 33.5px;
  height: 74px;
  padding: 3px 0 0 25px;
  border-bottom: 2px solid #e4e4e4;
}

.sub .diamond {
  margin-right: -19px;
}

.brown {
  fill: #86612f;
  font-weight: 700;
}

.group {
  display: flex;
  align-items: center;
  height: 96px;
  margin: 36px 48px 0;
  padding: 0 35px 0 18px;
  border-radius: 6px;
  background: #f6f6f6;
}

.cover {
  display: flex;
  flex-direction: column;
  align-items: center;
  justify-content: center;
  gap: 2px;
  width: 72px;
  height: 72px;
  margin-right: 20px;
  background: #aa8030;
  fill: #fff;
  font-weight: 700;
}

.pro-card {
  position: relative;
  display: flex;
  align-items: flex-start;
  height: 77px;
  margin: 41px 48px 0;
  padding: 45px 56px 0 51px;
  overflow: hidden;
  border-radius: 6px 6px 0 0;
  background: #fdf6e8;
}

.pro-card .shape {
  position: absolute;
  left: 0;
  top: 0;
}

.pro-card .name {
  position: relative;
  fill: url(#gold);
  font-weight: 500;
}

.pro-card .act {
  position: relative;
  margin: 3px 20px 0 auto;
  padding: 0;
  fill: #7f5c2c;
  font-weight: 400;
}

.pro-card .go {
  position: relative;
  margin-top: 9px;
}

.indices {
  display: flex;
  align-items: center;
  height: 99px;
  padding: 2px 36px 0 47px;
  border: solid #e4e4e4;
  border-width: 2px 0;
}

.idx {
  display: flex;
  align-items: center;
  gap: 16px;
}

.idx .up {
  fill: #cf5057;
  font-weight: 600;
}

.second {
  margin-left: 110px;
}

.third {
  margin-left: 128px;
}

.bar {
  width: 2px;
  height: 72px;
  margin: 0 38px 0 auto;
  background: #e8e8e8;
}

.actions {
  display: flex;
  align-items: flex-start;
  height: 247px;
  padding: 25px 46px 0 48px;
}

.order {
  display: flex;
  align-items: center;
  width: 630px;
  height: 96px;
  margin-right: 125px;
  padding: 0 18px;
  border-radius: 6px;
  background: linear-gradient(90deg, #ecc681, #93683f);
}

.pct {
  margin-left: 6px;
  fill: #fff;
  font-weight: 700;
}

.order .diamond {
  margin: 0 9px 0 33px;
}

.text {
  fill: url(#cream);
  font-weight: 500;
}

.end {
  margin: 0 7px 0 auto;
}

.actions .act {
  display: flex;
  flex-direction: column;
  align-items: center;
  gap: 22px;
  padding-top: 5px;
  fill: #808080;
}

.actions .act + .act {
  margin-left: 131px;
}

.actions .act + .act + .act {
  margin-left: 132px;
}

.smudge {
  position: absolute;
  left: 938px;
  top: 2804px;
}
</style>
